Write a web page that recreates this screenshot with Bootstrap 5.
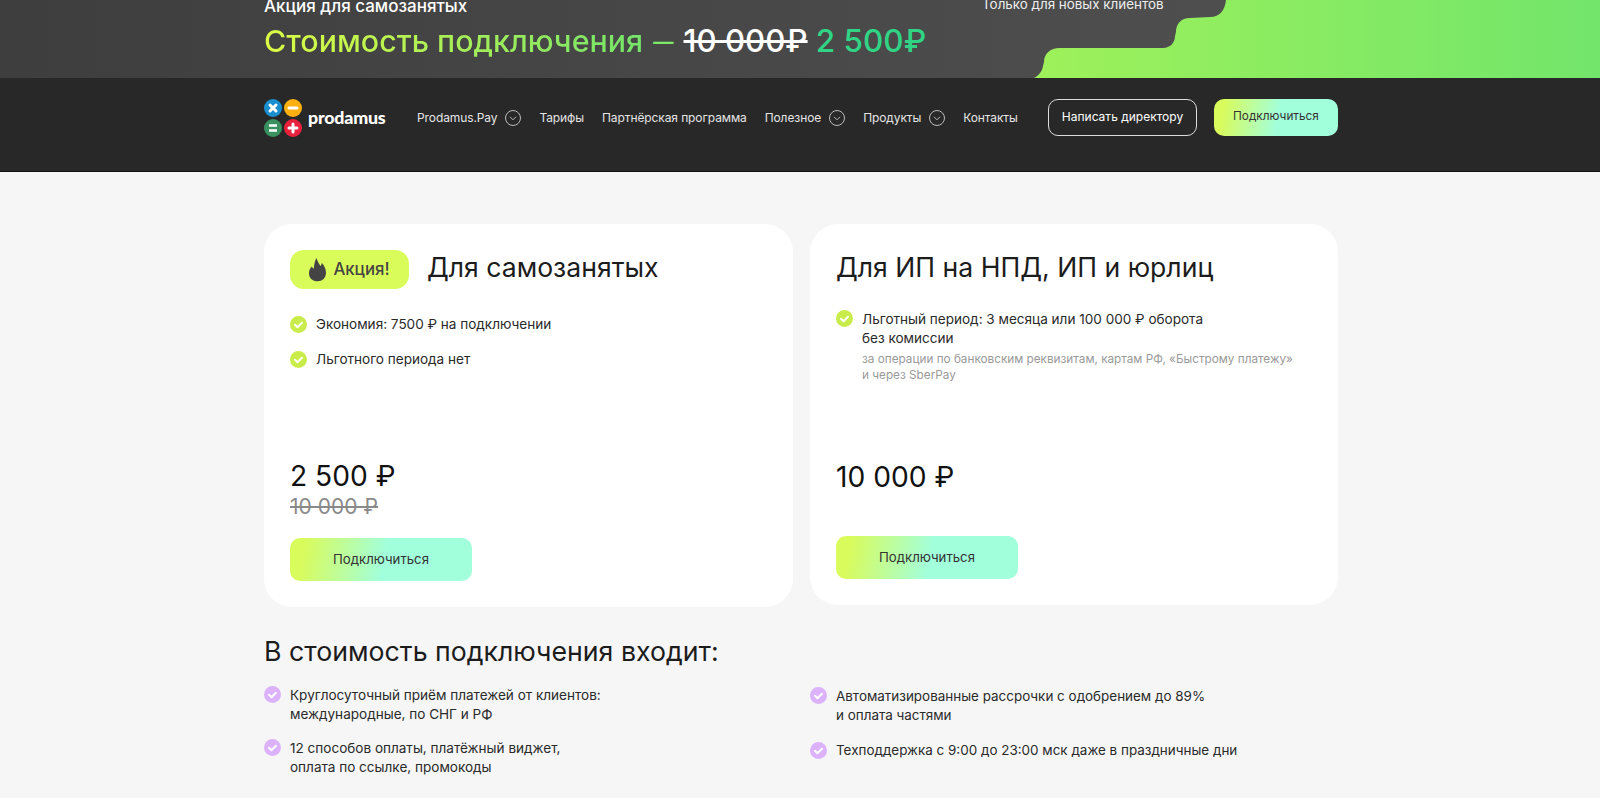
<!DOCTYPE html>
<html lang="ru">
<head>
  <meta charset="UTF-8">
  <title>Prodamus</title>
  <link href="https://cdn.jsdelivr.net/npm/bootstrap@5.3.3/dist/css/bootstrap.min.css" rel="stylesheet">
  <style>
    body { background: #f6f6f6; color: #1c1c1c; font-family: Inter, "Noto Sans", sans-serif; overflow: hidden; }
    .page-wrap { width: 1074px; margin-left: 264px; }
    .promo { height: 78px; background: linear-gradient(90deg, #3e3e3e, #4e4e4e 75%); overflow: hidden; }
    .promo-shape { position: absolute; left: 0; top: 0; }
    .promo-inner { position: relative; height: 78px; }
    .promo-sub { color: #fff; font-size: 17px; font-weight: 500; line-height: 20px; margin-top: -4px; }
    .promo-price { font-size: 30.4px; font-weight: 500; line-height: 40px; margin-top: 4px; white-space: nowrap; }
    .promo-lime { background: linear-gradient(90deg, #dcfb45, #74e36a); -webkit-background-clip: text; background-clip: text; color: transparent; }
    .promo-dash { font-family: Lato, sans-serif; color: #7ce668; }
    .promo-old { color: #fff; text-decoration: line-through; font-size: 31.2px; }
    .promo-new { color: #30d484; font-size: 31.5px; }
    .promo-note { position: absolute; left: 718px; top: -1px; color: #eee; font-size: 13.4px; line-height: 18px; }
    .top-nav { height: 94px; background: #282828; border-bottom: 1px solid #111; padding-top: 21px; }
    .brand-name { color: #fff; font-family: Lato, sans-serif; font-weight: 900; font-size: 17.8px; line-height: 1; margin-left: 6px; letter-spacing: -.2px; }
    .menu-link { color: #e4e4e4; font-size: 12px; letter-spacing: -.1px; white-space: nowrap; text-decoration: none; display: flex; align-items: center; gap: 8px; }
    .btn-outline-own { width: 149px; height: 37px; margin-top: -2px; border: 1px solid #ddd; border-radius: 10px; color: #fff; font-size: 12px; padding: 0; background: transparent; }
    .btn-grad { background: linear-gradient(100deg, #d9fb5c 0, #d9fb5c 8%, #a2ffdc 52%, #a2ffdc 100%); color: #333; border: 0; border-radius: 10px; padding: 0; }
    .btn-nav { width: 124px; height: 37px; margin-top: -2px; font-size: 11.8px; }
    .btn-card { width: 182px; height: 43px; font-size: 13.2px; }
    .offer { background: #fff; border-radius: 28px; padding: 26px 26px 0; }
    .offer-left { width: 529px; height: 383px; }
    .offer-right { width: 528px; height: 381px; }
    .offer-title { font-size: 26.6px; font-weight: 400; line-height: 32px; margin: 0; position: relative; top: -3px; }
    .promo-badge { width: 119px; height: 39px; background: #dafc5a; border-radius: 14px; color: #444; font-size: 16.8px; font-weight: 500; gap: 7px; }
    .perk { font-size: 13.55px; line-height: 19px; color: #2a2a2a; gap: 9px; }
    .perk svg { flex: none; }
    .perk-tight { font-size: 13.45px; padding-left: 9px; }
    .perk-note { font-size: 11.75px; line-height: 16px; color: #9a9a9a; margin-top: 3px; }
    .price-now { font-size: 28.2px; line-height: 34px; color: #111; }
    .price-old { font-size: 21px; line-height: 26px; color: #8a8a8a; text-decoration: line-through; }
    .incl-title { font-size: 26.7px; line-height: 32px; font-weight: 400; margin: 28px 0 0; color: #1c1c1c; }
  </style>
</head>
<body>
  <div class="promo position-relative">
    <svg class="promo-shape" width="1600" height="78" viewBox="0 0 1600 78">
      <defs><linearGradient id="g1" x1="0" y1="0" x2="1" y2="0"><stop offset="0" stop-color="#9ef15a"/><stop offset="1" stop-color="#72e56b"/></linearGradient></defs>
      <path fill="url(#g1)" d="M1226 0C1225 10 1220 17 1210 17L1190 18C1181 18 1176 24 1176 32L1175 36C1175 43 1170 48 1163 48L1060 48C1050 48 1044 54 1044 62L1043 66C1042 72 1038 76 1034 78L1600 78L1600 0Z"/>
    </svg>
    <div class="page-wrap promo-inner">
      <div class="promo-sub">Акция для самозанятых</div>
      <div class="promo-price"><span class="promo-lime">Стоимость подключения</span> <span class="promo-dash">—</span> <span class="promo-old">10 000₽</span> <span class="promo-new">2 500₽</span></div>
      <div class="promo-note">Только для новых клиентов</div>
    </div>
  </div>

  <nav class="top-nav">
    <div class="page-wrap d-flex align-items-center">
      <div class="d-flex align-items-center" style="width:153px">
        <svg width="38" height="38" viewBox="0 0 38 38">
          <circle cx="9" cy="9" r="9" fill="#1a8fd0"/><path d="M6 6l6 6M12 6l-6 6" stroke="#fff" stroke-width="3" stroke-linecap="round"/>
          <circle cx="29" cy="9" r="9" fill="#fbb00f"/><path d="M25 9h8" stroke="#fff" stroke-width="3" stroke-linecap="round"/>
          <circle cx="9" cy="29" r="9" fill="#3a9160"/><path d="M5 26.5h8M5 31.5h8" stroke="#fff" stroke-width="2.6"/>
          <circle cx="29" cy="29" r="9" fill="#e8213c"/><path d="M25 29h8M29 25v8" stroke="#fff" stroke-width="3" stroke-linecap="round"/>
        </svg>
        <span class="brand-name">prodamus</span>
      </div>
      <div class="d-flex align-items-center" style="gap:18px">
        <a class="menu-link" href="#">Prodamus.Pay <svg width="16" height="16" viewBox="0 0 16 16" fill="none" stroke="#bbb"><circle cx="8" cy="8" r="7.5"/><path d="M5 6.8l3 3 3-3"/></svg></a>
        <a class="menu-link" href="#">Тарифы</a>
        <a class="menu-link" href="#">Партнёрская программа</a>
        <a class="menu-link" href="#">Полезное <svg width="16" height="16" viewBox="0 0 16 16" fill="none" stroke="#bbb"><circle cx="8" cy="8" r="7.5"/><path d="M5 6.8l3 3 3-3"/></svg></a>
        <a class="menu-link" href="#">Продукты <svg width="16" height="16" viewBox="0 0 16 16" fill="none" stroke="#bbb"><circle cx="8" cy="8" r="7.5"/><path d="M5 6.8l3 3 3-3"/></svg></a>
        <a class="menu-link" href="#">Контакты</a>
      </div>
      <button class="btn btn-outline-own ms-auto">Написать директору</button>
      <button class="btn btn-grad btn-nav" style="margin-left:17px">Подключиться</button>
    </div>
  </nav>

  <main class="page-wrap">
    <div class="d-flex align-items-start justify-content-between" style="margin-top:52px">
      <section class="offer offer-left d-flex flex-column">
        <div class="d-flex align-items-center" style="gap:18px">
          <div class="promo-badge d-flex align-items-center justify-content-center">
            <svg width="17" height="24" viewBox="0 0 15 21"><path fill="#444" d="M6.500 0C7.500 3 9 5 10 7C10.800 6.200 11.300 5 11.300 4C13.500 6.500 15 9.500 15 13C15 17.500 11.800 20.500 7.500 20.500C3.200 20.500 0 17.500 0 13.500C0 10.500 1.200 9 2.500 7.500C3 8.500 3.500 9.200 4.200 9.500C4.500 6 5 3 6.500 0Z"/></svg>
            Акция!
          </div>
          <h2 class="offer-title">Для самозанятых</h2>
        </div>
        <div class="perk d-flex align-items-center" style="margin-top:26px">
          <svg width="17" height="17" viewBox="0 0 17 17"><circle cx="8.500" cy="8.500" r="8.500" fill="#c9ec4b"/><path d="M5 8.700l2.500 2.500 4.500-4.500" fill="none" stroke="#fff" stroke-width="2" stroke-linecap="round" stroke-linejoin="round"/></svg>
          <span>Экономия: 7500 ₽ на подключении</span>
        </div>
        <div class="perk d-flex align-items-center" style="margin-top:16px">
          <svg width="17" height="17" viewBox="0 0 17 17"><circle cx="8.500" cy="8.500" r="8.500" fill="#c9ec4b"/><path d="M5 8.700l2.500 2.500 4.500-4.500" fill="none" stroke="#fff" stroke-width="2" stroke-linecap="round" stroke-linejoin="round"/></svg>
          <span>Льготного периода нет</span>
        </div>
        <div class="price-now" style="margin-top:90px">2 500 ₽</div>
        <div class="price-old" style="margin-top:1px">10 000 ₽</div>
        <button class="btn btn-grad btn-card" style="margin-top:18px">Подключиться</button>
      </section>

      <section class="offer offer-right d-flex flex-column">
        <h2 class="offer-title" style="margin-top:4px">Для ИП на НПД, ИП и юрлиц</h2>
        <div class="perk d-flex align-items-start" style="margin-top:24px">
          <svg width="17" height="17" viewBox="0 0 17 17"><circle cx="8.500" cy="8.500" r="8.500" fill="#c9ec4b"/><path d="M5 8.700l2.500 2.500 4.500-4.500" fill="none" stroke="#fff" stroke-width="2" stroke-linecap="round" stroke-linejoin="round"/></svg>
          <div>
            <div>Льготный период: 3 месяца или 100 000 ₽ оборота<br>без комиссии</div>
            <div class="perk-note">за операции по банковским реквизитам, картам РФ, «Быстрому платежу»<br>и через SberPay</div>
          </div>
        </div>
        <div class="price-now" style="margin-top:77px">10 000 ₽</div>
        <button class="btn btn-grad btn-card" style="margin-top:42px">Подключиться</button>
      </section>
    </div>

    <h2 class="incl-title">В стоимость подключения входит:</h2>
    <div class="row g-0" style="margin-top:19px">
      <div class="col-6">
        <div class="perk d-flex align-items-start">
          <svg width="17" height="17" viewBox="0 0 17 17"><circle cx="8.500" cy="8.500" r="8.500" fill="#dbb2fb"/><path d="M5 8.700l2.500 2.500 4.500-4.500" fill="none" stroke="#fff" stroke-width="2" stroke-linecap="round" stroke-linejoin="round"/></svg>
          <div>Круглосуточный приём платежей от клиентов:<br>международные, по СНГ и РФ</div>
        </div>
        <div class="perk d-flex align-items-start" style="margin-top:15px">
          <svg width="17" height="17" viewBox="0 0 17 17"><circle cx="8.500" cy="8.500" r="8.500" fill="#dbb2fb"/><path d="M5 8.700l2.500 2.500 4.500-4.500" fill="none" stroke="#fff" stroke-width="2" stroke-linecap="round" stroke-linejoin="round"/></svg>
          <div>12 способов оплаты, платёжный виджет,<br>оплата по ссылке, промокоды</div>
        </div>
      </div>
      <div class="col-6">
        <div class="perk perk-tight d-flex align-items-start" style="margin-top:1px">
          <svg width="17" height="17" viewBox="0 0 17 17"><circle cx="8.500" cy="8.500" r="8.500" fill="#dbb2fb"/><path d="M5 8.700l2.500 2.500 4.500-4.500" fill="none" stroke="#fff" stroke-width="2" stroke-linecap="round" stroke-linejoin="round"/></svg>
          <div>Автоматизированные рассрочки с одобрением до 89%<br>и оплата частями</div>
        </div>
        <div class="perk perk-tight d-flex align-items-center" style="margin-top:16px">
          <svg width="17" height="17" viewBox="0 0 17 17"><circle cx="8.500" cy="8.500" r="8.500" fill="#dbb2fb"/><path d="M5 8.700l2.500 2.500 4.500-4.500" fill="none" stroke="#fff" stroke-width="2" stroke-linecap="round" stroke-linejoin="round"/></svg>
          <div>Техподдержка с 9:00 до 23:00 мск даже в праздничные дни</div>
        </div>
      </div>
    </div>
  </main>

  <script src="https://cdn.jsdelivr.net/npm/bootstrap@5.3.3/dist/js/bootstrap.bundle.min.js"></script>
</body>
</html>
